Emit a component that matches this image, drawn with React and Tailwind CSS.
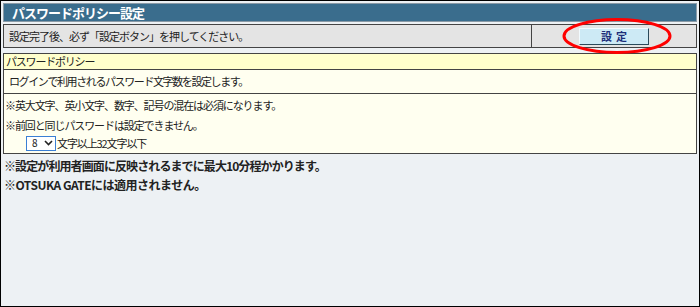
import React from 'react';

const JP = { fontFamily: '"Noto Sans CJK JP", "Liberation Sans", sans-serif' };

// ── Red annotation ellipse ────────────────────────────────────────────────────
const Highlight = () => (
    <svg className="absolute left-[560px] top-[16px] pointer-events-none" width="112" height="38" viewBox="0 0 112 38">
        <ellipse cx="56" cy="19" rx="53" ry="16.5" fill="none" stroke="#ff0000" strokeWidth="3" />
    </svg>
);

const LengthSelect = () => (
    <div className="flex items-center w-[30px] h-[15px] border border-[#3b7fd4] bg-white pl-[5px] pr-[2px] justify-between">
        <span className="text-[10px] leading-none text-[#222]">8</span>
        <svg width="9" height="6" viewBox="0 0 9 6">
            <path d="M1 1 L4.5 4.5 L8 1" fill="none" stroke="#222" strokeWidth="1.6" />
        </svg>
    </div>
);

export default function App() {
    return (
        <div className="relative w-[700px] h-[307px] border border-black bg-[#edf1f4] px-[2px] pt-[2px] text-[#222]" style={JP}>
            {/* title */}
            <div className="h-[19px] border border-[#8a9aa6] bg-[#3a6d8d] flex items-center pl-[8px]">
                <span className="text-white font-bold text-[13px] tracking-[-1px] leading-none">パスワードポリシー設定</span>
            </div>

            {/* notice row */}
            <div className="mt-[2px] h-[24px] flex border border-[#444] bg-[#e4e4e4]">
                <div className="flex-1 flex items-center pl-[5px] border-r border-[#444]">
                    <span className="text-[11px] tracking-[-1px] leading-none">設定完了後、必ず「設定ボタン」を押してください。</span>
                </div>
                <div className="w-[164px] flex items-center justify-center">
                    <button className="w-[70px] h-[17px] bg-[#cdeaf5] border border-t-[#f2fbff] border-l-[#f2fbff] border-b-[#2a4a5a] border-r-[#2a4a5a] text-[#1c2e7a] font-bold text-[11px] leading-none tracking-[4px] pl-[4px]">
                        設定
                    </button>
                </div>
            </div>

            {/* policy box */}
            <div className="mt-[5px] border border-[#444] bg-[#fffff0]">
                <div className="h-[16px] bg-[#ffffcc] border-b border-[#444] flex items-center pl-[2px]">
                    <span className="text-[11px] tracking-[-1.2px] leading-none">パスワードポリシー</span>
                </div>
                <div className="h-[24px] border-b border-[#444] flex items-center pl-[5px]">
                    <span className="text-[11px] tracking-[-1.4px] leading-none">ログインで利用されるパスワード文字数を設定します。</span>
                </div>
                <div className="h-[59px] pl-[1px] pt-[1px] text-[11px] tracking-[-1.1px]">
                    <div className="h-[20px] flex items-center">※英大文字、英小文字、数字、記号の混在は必須になります。</div>
                    <div className="h-[20px] flex items-center">※前回と同じパスワードは設定できません。</div>
                    <div className="h-[16px] flex items-center pl-[21px] gap-[1px]">
                        <LengthSelect />
                        <span>文字以上32文字以下</span>
                    </div>
                </div>
            </div>

            {/* footnotes */}
            <div className="mt-[2px] pl-[1px] text-[12px] font-bold tracking-[-0.9px] leading-[19px]">
                <div>※設定が利用者画面に反映されるまでに最大10分程かかります。</div>
                <div className="tracking-[-0.5px]">※OTSUKA GATEには適用されません。</div>
            </div>

            <Highlight />
        </div>
    );
}
